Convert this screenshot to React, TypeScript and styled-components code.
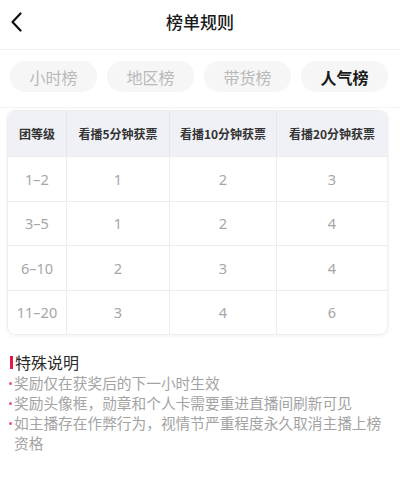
import React from "react";
import styled, { createGlobalStyle } from "styled-components";

const Global = createGlobalStyle`
  html, body { margin: 0; padding: 0; background: #fff; }
  body { font-family: "Noto Sans CJK SC", "Noto Sans", sans-serif; }
  * { box-sizing: border-box; }
`;

const Page = styled.div`
  width: 400px;
  height: 482px;
  background: #fff;
  display: flex;
  flex-direction: column;
  overflow: hidden;
`;

const Header = styled.div`
  height: 50px;
  display: flex;
  align-items: center;
  justify-content: center;
  position: relative;
  border-bottom: 1px solid #f1f1f1;
`;

const Back = styled.div`
  position: absolute;
  left: 10px;
  top: 11px;
  width: 16px;
  height: 22px;
  display: flex;
  align-items: center;
`;

const Title = styled.div`
  font-size: 17px;
  font-weight: 500;
  color: #1a1a1a;
  margin-top: -6px;
`;

const Tabs = styled.div`
  display: flex;
  gap: 10px;
  padding: 11px 10px 0 10px;
  height: 58px;
  border-bottom: 1px solid #f3f3f3;
`;

const Tab = styled.div<{ $active?: boolean }>`
  width: 87px;
  height: 31px;
  border-radius: 15px;
  background: #f6f6f6;
  display: flex;
  align-items: center;
  justify-content: center;
  font-size: 16px;
  color: ${(p) => (p.$active ? "#1a1a1a" : "#b9b9b9")};
  font-weight: ${(p) => (p.$active ? 700 : 400)};
`;

const TableWrap = styled.div`
  margin: 2px 12px 0 7px;
  border-radius: 8px;
  overflow: hidden;
  box-shadow: 0 1px 4px rgba(0, 0, 0, 0.06);
  border: 1px solid #efefef;
`;

const Grid = styled.div`
  display: grid;
  grid-template-columns: 58px 103px 107px 1fr;
`;

const HeadCell = styled.div`
  height: 45px;
  background: #eff1f6;
  display: flex;
  align-items: center;
  justify-content: center;
  font-size: 12px;
  font-weight: 700;
  color: #333;
  border-left: 1px solid #e4e6ea;
  &:first-child { border-left: none; }
`;

const Cell = styled.div<{ $first?: boolean }>`
  height: 44.5px;
  display: flex;
  align-items: center;
  justify-content: center;
  font-size: 14.5px;
  color: #a6a6a6;
  border-top: 1px solid #ededed;
  border-left: ${(p) => (p.$first ? "none" : "1px solid #ededed")};
  font-family: "Noto Sans", sans-serif;
`;

const Notes = styled.div`
  padding: 16px 12px 0 10px;
`;

const NoteTitle = styled.div`
  display: flex;
  align-items: center;
  gap: 2px;
  font-size: 16px;
  color: #2a2a2a;
  line-height: 22px;
  height: 22px;
`;

const RedBar = styled.span`
  width: 3px;
  height: 13px;
  background: #e8164f;
  display: inline-block;
`;

const NoteItem = styled.div`
  position: relative;
  padding-left: 4px;
  font-size: 14.7px;
  line-height: 20px;
  color: #a3a3a3;
  &::before {
    content: "";
    position: absolute;
    left: -1px;
    top: 9px;
    width: 3px;
    height: 3px;
    border-radius: 50%;
    background: #f0507a;
  }
`;

const tabs = ["小时榜", "地区榜", "带货榜", "人气榜"];
const heads = ["团等级", "看播5分钟获票", "看播10分钟获票", "看播20分钟获票"];
const rows = [
  ["1–2", "1", "2", "3"],
  ["3–5", "1", "2", "4"],
  ["6–10", "2", "3", "4"],
  ["11–20", "3", "4", "6"],
];
const notes = [
  "奖励仅在获奖后的下一小时生效",
  "奖励头像框，勋章和个人卡需要重进直播间刷新可见",
  "如主播存在作弊行为，视情节严重程度永久取消主播上榜资格",
];

export default function App() {
  return (
    <Page>
      <Global />
      <Header>
        <Back>
          <svg width="12" height="20" viewBox="0 0 12 20">
            <path d="M10.5 1.5 L2.5 10 L10.5 18.5" fill="none" stroke="#111" strokeWidth="2.2" strokeLinecap="round" strokeLinejoin="round" />
          </svg>
        </Back>
        <Title>榜单规则</Title>
      </Header>
      <Tabs>
        {tabs.map((t, i) => (
          <Tab key={t} $active={i === 3}>{t}</Tab>
        ))}
      </Tabs>
      <TableWrap>
        <Grid>
          {heads.map((h) => (
            <HeadCell key={h}>{h}</HeadCell>
          ))}
          {rows.map((r, ri) =>
            r.map((c, ci) => (
              <Cell key={ri + "-" + ci} $first={ci === 0}>{c}</Cell>
            ))
          )}
        </Grid>
      </TableWrap>
      <Notes>
        <NoteTitle>
          <RedBar />
          特殊说明
        </NoteTitle>
        {notes.map((n) => (
          <NoteItem key={n}>{n}</NoteItem>
        ))}
      </Notes>
    </Page>
  );
}
